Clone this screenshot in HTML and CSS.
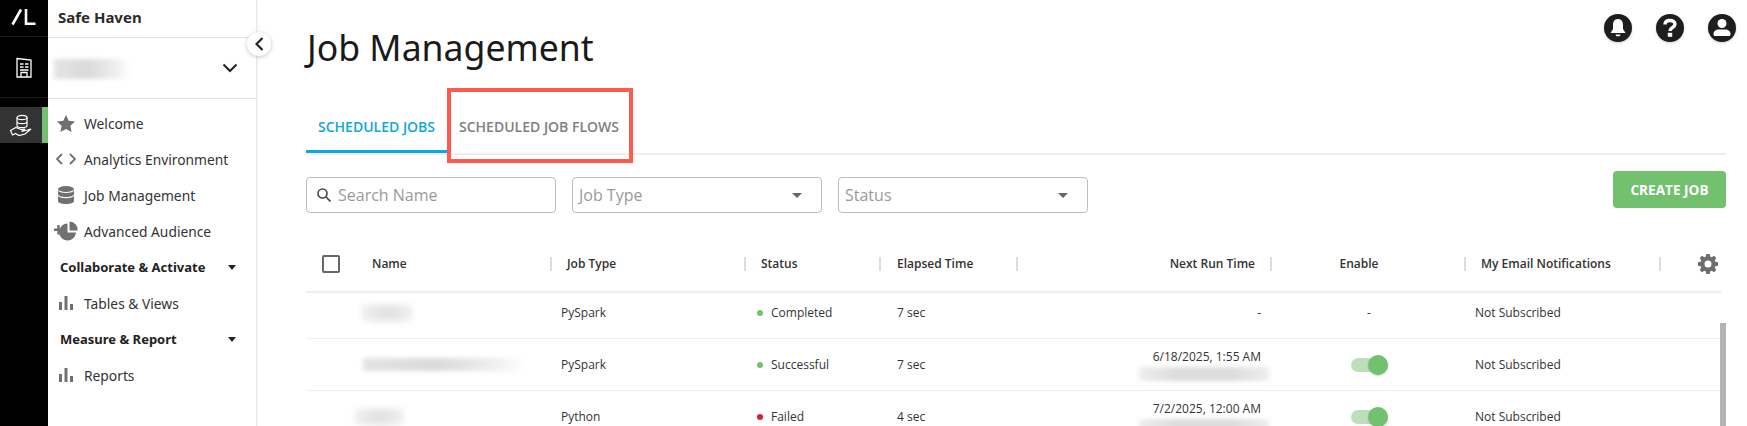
FILE: index.html
```html
<!DOCTYPE html>
<html lang="en">
<head>
<meta charset="utf-8">
<title>Job Management</title>
<link rel="stylesheet" href="styles.css">
</head>
<body>
<div class="app">
  <nav class="rail">
    <div class="rail-logo">
      <svg width="48" height="37" viewBox="0 0 48 37" fill="none" stroke="#fff" stroke-width="2.600" aria-label="Logo"><path d="M12.500 24.500 21 9.500M26 9v14.700h9.500"/></svg>
    </div>
    <div class="rail-org">
      <svg width="18" height="21" viewBox="0 0 18 21" fill="none" stroke="#fff" stroke-width="1.3"><path d="M2 1.500 16 3v17H2z"/><path d="M5 7h3.500M10 7h3.500M5 10h3.500M10 10h3.500M5 13h8.500M6 20v-4.500h6V20"/></svg>
    </div>
    <div class="rail-item">
      <svg width="24" height="24" viewBox="0 0 24 24" fill="none" stroke="#fff" stroke-width="1.2"><ellipse cx="13" cy="4.500" rx="5" ry="2.200"/><path d="M8 4.500v8c0 1.200 2.200 2.200 5 2.200s5-1 5-2.200v-8M8 8.500c0 1.200 2.200 2.200 5 2.200s5-1 5-2.200"/><path d="M1.500 17.500 7 14.500l5 2 4-.5-3.500 2.500 6-1.500 3.500-1-6 5-6 1.500-3.500-2-3 1.500z"/></svg>
    </div>
  </nav>

  <aside class="sidebar">
    <div class="side-title">Safe Haven</div>
    <div class="workspace">
      <div class="blur blur-workspace"></div>
      <svg width="16" height="10" viewBox="0 0 16 10" fill="none" stroke="#222" stroke-width="2"><path d="M1.500 1.500 8 8l6.500-6.500"/></svg>
    </div>
    <button class="collapse" type="button" aria-label="Collapse">
      <svg width="9" height="14" viewBox="0 0 9 14" fill="none" stroke="#222" stroke-width="2.200"><path d="M7.500 1 1.500 7l6 6"/></svg>
    </button>
    <ul class="nav">
      <li class="nav-item">
        <span class="nav-icon"><svg width="18" height="17" viewBox="0 0 18 17" fill="#707070"><path d="m9 0 2.700 5.700 6.300.8-4.600 4.300 1.200 6.200L9 14l-5.600 3 1.200-6.200L0 6.500l6.300-.8z"/></svg></span>
        Welcome
      </li>
      <li class="nav-item">
        <span class="nav-icon"><svg width="20" height="12" viewBox="0 0 20 12" fill="none" stroke="#707070" stroke-width="1.800"><path d="M6 1 1 6l5 5M14 1l5 5-5 5"/></svg></span>
        Analytics Environment
      </li>
      <li class="nav-item">
        <span class="nav-icon"><svg width="16" height="18" viewBox="0 0 16 18" fill="#707070"><ellipse cx="8" cy="3" rx="8" ry="3"/><path d="M0 4.800C1.500 6.300 4.500 7 8 7s6.500-.7 8-2.200V8c0 1.700-3.600 3-8 3S0 9.700 0 8z"/><path d="M0 10c1.500 1.500 4.500 2.200 8 2.200s6.500-.7 8-2.200v5c0 1.700-3.600 3-8 3s-8-1.300-8-3z"/></svg></span>
        Job Management
      </li>
      <li class="nav-item">
        <span class="nav-icon"><svg width="24" height="20" viewBox="0 0 24 20" fill="#707070"><path d="M0 7.500h3.300V4h2.400v3.500H9V10H5.700v3.500H3.300V10H0z"/><path d="M13.500 2.500v9h8.500a8.500 8.500 0 1 1-8.500-9z"/><path d="M15.500.5a8 8 0 0 1 8 9h-8z"/></svg></span>
        Advanced Audience
      </li>
      <li class="nav-section">Collaborate &amp; Activate<span class="caret"></span></li>
      <li class="nav-item">
        <span class="nav-icon"><svg width="14" height="14" viewBox="0 0 14 14" fill="#707070"><path d="M0 6h3v8H0zM5.500 0h3v14h-3zM11 8h3v6h-3z"/></svg></span>
        Tables &amp; Views
      </li>
      <li class="nav-section">Measure &amp; Report<span class="caret"></span></li>
      <li class="nav-item">
        <span class="nav-icon"><svg width="14" height="14" viewBox="0 0 14 14" fill="#707070"><path d="M0 6h3v8H0zM5.500 0h3v14h-3zM11 8h3v6h-3z"/></svg></span>
        Reports
      </li>
    </ul>
  </aside>

  <main class="main">
    <header class="topbar">
      <h1 class="title">Job Management</h1>
      <div class="top-icons">
        <svg class="top-icon" width="28" height="28" viewBox="0 0 28 28"><circle cx="14" cy="14" r="14" fill="#1e1e1e"/><path fill="#fff" d="M14 5c3.600 0 5 2.800 5 6v4l2.500 4h-15L9 15v-4c0-3.200 1.400-6 5-6zM11.500 20.500h5a2.500 2 0 0 1-5 0z"/></svg>
        <svg class="top-icon" width="28" height="28" viewBox="0 0 28 28"><circle cx="14" cy="14" r="14" fill="#1e1e1e"/><path fill="none" stroke="#fff" stroke-width="3.400" d="M9 10.500c0-3 2.300-4 5-4s5 1.300 5 3.800c0 3.500-5 3-5 6.700"/><rect x="11.800" y="18.800" width="4.400" height="4" fill="#fff"/></svg>
        <svg class="top-icon" width="28" height="28" viewBox="0 0 28 28"><circle cx="14" cy="14" r="14" fill="#1e1e1e"/><circle cx="14" cy="9.500" r="4.500" fill="#fff"/><path fill="#fff" d="M5.500 20c0-3 2.500-4.500 5-4.500h7c2.500 0 5 1.500 5 4.500v.5c0 .8-.7 1.500-1.500 1.500H7c-.8 0-1.500-.7-1.500-1.500z"/></svg>
      </div>
    </header>

    <div class="tabs">
      <div class="tab tab-active">SCHEDULED JOBS</div>
      <div class="tab tab-flagged">SCHEDULED JOB FLOWS<span class="annotation"></span></div>
    </div>

    <div class="filters">
      <div class="field field-search">
        <svg width="14" height="14" viewBox="0 0 14 14" fill="none" stroke="#444" stroke-width="1.600"><circle cx="5.500" cy="5.500" r="4.500"/><path d="m9 9 4.500 4.500"/></svg>
        <span>Search Name</span>
      </div>
      <div class="field"><span>Job Type</span><i class="caret caret-grey"></i></div>
      <div class="field"><span>Status</span><i class="caret caret-grey"></i></div>
      <button class="create" type="button">CREATE JOB</button>
    </div>

    <section class="table">
      <div class="grid head">
        <div class="th th-name"><span class="checkbox"></span><span>Name</span></div>
        <div class="th">Job Type</div>
        <div class="th">Status</div>
        <div class="th th-elapsed">Elapsed Time</div>
        <div class="th th-right">Next Run Time</div>
        <div class="th th-center">Enable</div>
        <div class="th">My Email Notifications</div>
        <div class="th-gear">
          <svg width="20" height="20" viewBox="0 0 20 20" fill="#6e6e6e"><path fill-rule="evenodd" d="M8.300 0h3.400l.5 2.600 1.500.6L16 1.700l2.300 2.400-1.500 2.200.6 1.500 2.600.5v3.400l-2.600.5-.6 1.500 1.500 2.200L16 18.300l-2.300-1.500-1.500.6-.5 2.600H8.300l-.5-2.600-1.500-.6L4 18.300l-2.300-2.400 1.500-2.200-.6-1.500-2.600-.5V8.300l2.600-.5.6-1.500-1.500-2.200L4 1.700l2.300 1.500 1.500-.6zM10 6.500a3.500 3.500 0 1 0 0 7 3.500 3.500 0 0 0 0-7z"/></svg>
        </div>
      </div>

      <div class="grid row row-first">
        <div class="td"><div class="blur blur-soft blur-name1"></div></div>
        <div class="td td-type">PySpark</div>
        <div class="td td-status"><i class="dot dot-ok"></i>Completed</div>
        <div class="td td-elapsed">7 sec</div>
        <div class="td td-right">-</div>
        <div class="td td-center">-</div>
        <div class="td td-email">Not Subscribed</div>
      </div>

      <div class="grid row">
        <div class="td"><div class="blur blur-name2"></div></div>
        <div class="td td-type">PySpark</div>
        <div class="td td-status"><i class="dot dot-ok"></i>Successful</div>
        <div class="td td-elapsed">7 sec</div>
        <div class="td td-right td-stack">6/18/2025, 1:55 AM<div class="blur blur-date"></div></div>
        <div class="td td-center"><span class="toggle"></span></div>
        <div class="td td-email">Not Subscribed</div>
      </div>

      <div class="grid row">
        <div class="td"><div class="blur blur-soft blur-name3"></div></div>
        <div class="td td-type">Python</div>
        <div class="td td-status"><i class="dot dot-bad"></i>Failed</div>
        <div class="td td-elapsed">4 sec</div>
        <div class="td td-right td-stack">7/2/2025, 12:00 AM<div class="blur blur-date"></div></div>
        <div class="td td-center"><span class="toggle"></span></div>
        <div class="td td-email">Not Subscribed</div>
      </div>

      <div class="scrollbar"></div>
    </section>
  </main>
</div>
</body>
</html>
```
FILE: styles.css
```css
* { box-sizing: border-box; }
html, body { margin: 0; height: 426px; overflow: hidden; background: #fff; }
body { font-family: "Open Sans", "Liberation Sans", sans-serif; color: #222; }
.app { display: flex; height: 426px; overflow: hidden; }

.rail { width: 48px; flex: none; background: #000; display: flex; flex-direction: column; }
.rail-logo { height: 37px; border-bottom: 1px solid #1c1c1c; }
.rail-logo svg { display: block; }
.rail-org { height: 61px; display: flex; align-items: center; justify-content: center; border-bottom: 1px solid #1c1c1c; }
.rail-item { margin-top: 9px; height: 36px; background: #333; border-right: 6px solid #72c16e; display: flex; align-items: center; justify-content: center; }

.sidebar { position: relative; width: 209px; flex: none; border-right: 1px solid #e8e8e8; box-shadow: 1px 0 3px rgba(0,0,0,.05); font-family: "Noto Sans", sans-serif; }
.side-title { height: 38px; padding: 7px 0 0 10px; font-weight: 700; font-size: 15px; line-height: 20px; color: #2b2b2b; border-bottom: 1px solid #e0e0e0; }
.workspace { height: 61px; padding: 0 18px 0 6px; display: flex; align-items: center; justify-content: space-between; border-bottom: 1px solid #e0e0e0; }
.blur { background: linear-gradient(90deg, #e4e4e4, #dadada 45%, #eee 80%, #fff); filter: blur(2px); }
.blur-soft { background: radial-gradient(ellipse at center, #dedede, #f1f1f1 70%, #fff); }
.blur-workspace { width: 76px; height: 20px; margin-top: 2px; }
.collapse { position: absolute; left: 199px; top: 32px; width: 24px; height: 24px; padding: 0; border: 0; border-radius: 50%; background: #fff; box-shadow: 0 1px 4px rgba(0,0,0,.22); display: flex; align-items: center; justify-content: center; }

.nav { list-style: none; margin: 6px 0 0; padding: 0; }
.nav-item { height: 36px; display: flex; align-items: center; padding-left: 6px; font-size: 13.8px; color: #333; }
.nav-icon { width: 24px; margin-right: 6px; display: flex; justify-content: center; flex: none; }
.nav-section { height: 36px; display: flex; align-items: center; padding-left: 12px; font-weight: 700; font-size: 13px; color: #222; position: relative; }
.caret { width: 0; height: 0; border-left: 4px solid transparent; border-right: 4px solid transparent; border-top: 5px solid #222; }
.nav-section .caret { position: absolute; left: 180px; top: 16px; }
.caret-grey { border-left-width: 5px; border-right-width: 5px; border-top-color: #666; }

.main { flex: 1; min-width: 0; }
.topbar { height: 105px; display: flex; justify-content: space-between; padding: 0 11px 0 50px; }
.title { margin: 22px 0 0; font: 400 35.6px/50px "Noto Sans", sans-serif; color: #1a1a1a; }
.top-icons { display: flex; gap: 24px; margin-top: 14px; }
.top-icon { filter: drop-shadow(0 1px 1px rgba(0,0,0,.2)); }

.tabs { display: flex; height: 48px; margin: 0 21px 0 49px; box-shadow: 0 2px 0 #eee; align-items: stretch; }
.tab { position: relative; padding: 0 12px; width: 141px; font-weight: 600; font-size: 14px; line-height: 44px; white-space: nowrap; color: #808080; }
.tab-active { color: #0ea7e0; border-bottom: 3px solid #0ea7e0; }
.annotation { position: absolute; left: 0; top: -17px; width: 186px; height: 75px; border: 4px solid #ff5a4f; }

.filters { display: flex; margin: 18px 21px 0 49px; gap: 16px; align-items: flex-start; }
.field { margin-top: 6px; width: 250px; height: 36px; border: 1px solid #bdbdbd; border-radius: 4px; padding: 0 19px 0 6px; display: flex; align-items: center; justify-content: space-between; font-size: 16px; color: #9a9a9a; }
.field-search { justify-content: flex-start; gap: 7px; padding-left: 10px; }
.create { margin-left: auto; width: 113px; height: 37px; border: 0; border-radius: 4px; background: #72c16e; color: #fff; font: 700 13.6px "Open Sans", sans-serif; padding: 0; }

.table { position: relative; margin: 0 21px 0 49px; padding-top: 24px; height: 213px; }
.grid { display: grid; grid-template-columns: 246px 194px 135px 137px 254px 194px 195px 60px; width: 1415px; align-items: center; }
.head { height: 56px; border-bottom: 2px solid #eee; }
.th { height: 14px; line-height: 14px; padding-left: 15px; border-right: 2px solid #ddd; font-size: 12px; font-weight: 600; color: #333; white-space: nowrap; }
.th-name { padding-left: 16px; display: flex; align-items: center; gap: 32px; }
.th-elapsed { padding-left: 16px; }
.th-right { text-align: right; padding-right: 15px; }
.th-center { text-align: center; padding: 0 18px 0 0; }
.th-gear { display: flex; width: 60px; justify-content: flex-start; padding-left: 37px; }
.checkbox { width: 18px; height: 18px; border: 2px solid #666; border-radius: 2px; flex: none; }

.row { height: 52px; border-bottom: 1px solid #eee; }
.row-first { height: 46px; padding-bottom: 6px; }
.td { font-size: 12px; color: #333; white-space: nowrap; }
.td-type { padding-left: 9px; }
.td-status { padding-left: 11px; display: flex; align-items: center; gap: 8px; }
.td-elapsed { padding-left: 16px; }
.td-right { text-align: right; padding-right: 11px; }
.td-center { text-align: center; display: flex; justify-content: center; }
.td-email { padding-left: 9px; }
.td-stack { display: flex; flex-direction: column; align-items: flex-end; margin-top: 1px; line-height: 14px; }
.dot { width: 6px; height: 6px; border-radius: 50%; flex: none; }
.dot-ok { background: #72c16e; }
.dot-bad { background: #d81e3a; }
.toggle { position: relative; display: block; width: 37px; height: 14px; border-radius: 7px; background: #bce0b9; }
.toggle::after { content: ""; position: absolute; right: 0; top: -3px; width: 20px; height: 20px; border-radius: 50%; background: #72c16e; box-shadow: 0 1px 2px rgba(0,0,0,.18); }

.blur-name1 { width: 52px; height: 20px; margin-left: 55px; }
.blur-name2 { width: 162px; height: 13px; margin-left: 57px; }
.blur-name3 { width: 50px; height: 20px; margin-left: 48px; }
.blur-date { width: 130px; height: 14px; margin: 3px -8px 0 0; background: linear-gradient(90deg, #eee, #dcdcdc 30%, #dcdcdc 70%, #eee); }

.scrollbar { position: absolute; right: 0; top: 110px; width: 6px; height: 103px; background: #b3b3b3; }
```
